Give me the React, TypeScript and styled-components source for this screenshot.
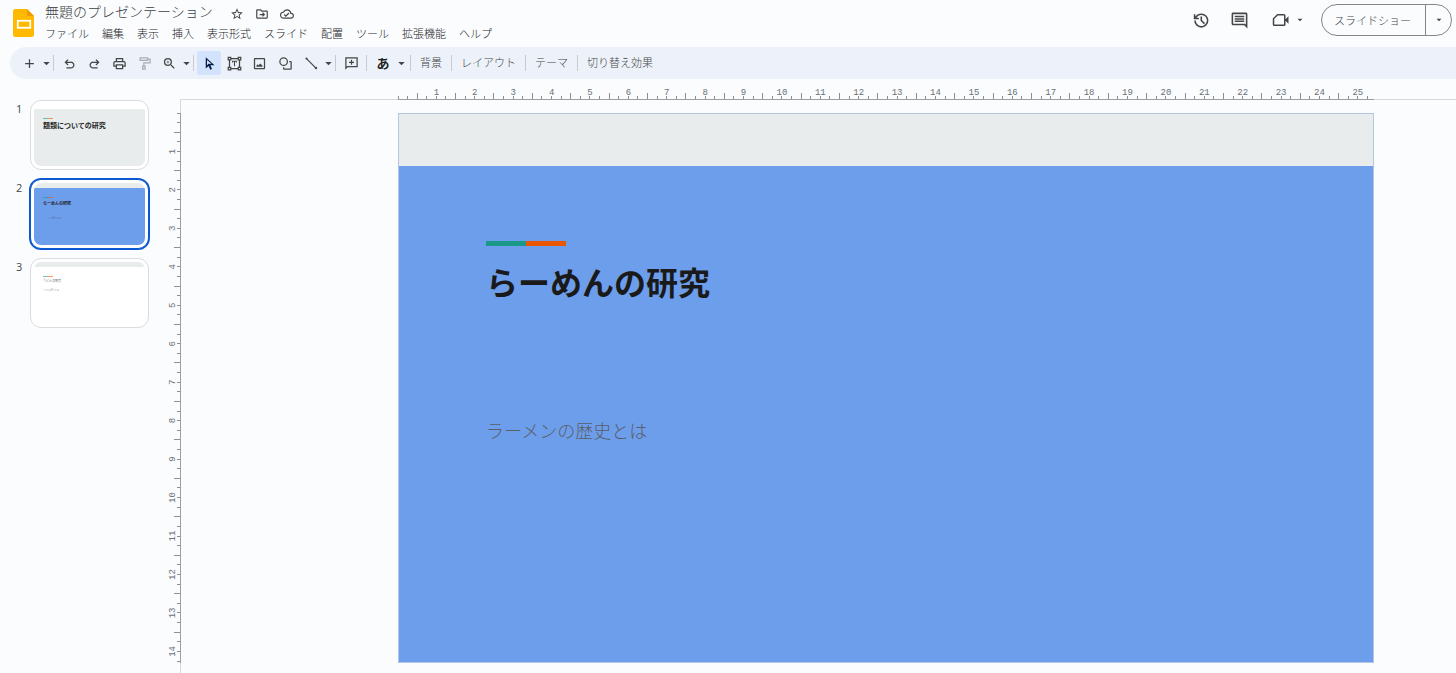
import React from 'react';
import styled, { createGlobalStyle, css } from 'styled-components';

const Global = createGlobalStyle`
  *, *::before, *::after { box-sizing: border-box; }
  body {
    margin: 0;
    background: #fafcfe;
    color: #444746;
    font-family: "Noto Sans CJK JP", sans-serif;
    font-weight: 300;
    font-size: 11px;
    overflow: hidden;
  }
  button { font: inherit; color: inherit; background: none; border: 0; padding: 0; margin: 0; }
  h1, h2, p, ol, ul { margin: 0; padding: 0; list-style: none; }
`;

const Page = styled.div`
  display: flex;
  flex-direction: column;
  height: 100vh;
`;

const Header = styled.header`
  display: flex;
  justify-content: space-between;
  height: 47px;
  padding: 0 4px 0 13px;
`;

const Brand = styled.div`
  display: flex;
  gap: 11px;
`;

const LogoLink = styled.a`
  display: block;
  padding-top: 9px;
  height: 37px;
  svg { display: block; }
`;

const TitleRow = styled.div`
  display: flex;
  align-items: center;
  gap: 17px;
  height: 24px;
`;

const DocTitle = styled.h1`
  font-size: 14px;
  line-height: 22px;
  padding-bottom: 2px;
  font-weight: 300;
  color: #3c4043;
`;

const TitleActions = styled.div`
  display: flex;
  gap: 11px;
  padding-top: 4px;
`;

const MenuBar = styled.nav`
  display: flex;
  gap: 13px;
`;

const MenuItem = styled.button`
  font-size: 11px;
  line-height: 18px;
  color: #1f1f1f;
  white-space: nowrap;
`;

const HeaderActions = styled.div`
  display: flex;
  align-items: flex-start;
  padding-top: 4px;
`;

const IconButton = styled.button<{ $w?: number; $h?: number; $active?: boolean; $faded?: boolean }>`
  display: flex;
  flex: none;
  align-items: center;
  justify-content: center;
  width: ${p => p.$w ?? 24}px;
  height: ${p => p.$h ?? 24}px;
  border-radius: 2px;
  ${p => p.$active && css`background: #d3e3fd; color: #041e49;`}
  ${p => p.$faded && css`opacity: 0.4;`}
  svg { display: block; flex: none; }
`;

const SlideshowGroup = styled.div`
  display: flex;
  height: 32px;
  margin-left: 16px;
  border: 1px solid #80868b;
  border-radius: 16px;
`;

const SlideshowButton = styled.button`
  padding: 0 12px;
  width: 104px;
  font-size: 11px;
  white-space: nowrap;
  text-align: left;
  border-right: 1px solid #80868b;
`;

const Toolbar = styled.div`
  display: flex;
  align-items: center;
  gap: 1px;
  flex: none;
  height: 32px;
  margin-left: 10px;
  padding-left: 7px;
  border-radius: 16px 0 0 16px;
  background: #edf2fa;
`;

const Divider = styled.span<{ $gap?: number }>`
  flex: none;
  width: 1px;
  height: 16px;
  margin: 0 ${p => p.$gap ?? 2}px;
  background: #c7cbd1;
`;

const TextButton = styled.button`
  padding: 0 4px 2px;
  font-size: 11px;
  line-height: 22px;
  white-space: nowrap;
`;

const InputTools = styled.button`
  width: 26px;
  height: 24px;
  font-size: 13px;
  line-height: 24px;
  font-weight: 700;
  color: #1f1f1f;
`;

const Main = styled.main`
  display: flex;
  flex: 1;
  min-height: 0;
`;

const Filmstrip = styled.ol`
  flex: none;
  width: 160px;
  padding: 21px 0 0 13px;
  display: flex;
  flex-direction: column;
  gap: 9px;
`;

const FilmItem = styled.li`
  display: flex;
`;

const FilmNumber = styled.span`
  width: 17px;
  padding: 2px 0 0 3px;
  font: 400 11px/14px "Open Sans", sans-serif;
  color: #444746;
`;

const Thumb = styled.button<{ $selected?: boolean }>`
  display: block;
  width: 119px;
  height: 70px;
  padding: 3px;
  background: #fff;
  border: 1px solid #dadce0;
  border-radius: 11px;
  ${p => p.$selected && css`border-color: #0b57d0; box-shadow: 0 0 0 1px #0b57d0;`}
`;

const ThumbSlide = styled.span<{ $top: string; $body: string }>`
  display: flex;
  flex-direction: column;
  height: 100%;
  border-radius: 7px;
  overflow: hidden;
  text-align: left;
  background: linear-gradient(${p => p.$top} 5px, ${p => p.$body} 5px);
  padding: 14px 0 0 9px;
`;

const ThumbTitle = styled.span<{ $size: number; $bold?: boolean; $gap: number }>`
  margin: 1px 0 ${p => p.$gap}px;
  font-size: ${p => p.$size}px;
  line-height: ${p => p.$size + 4}px;
  font-weight: ${p => (p.$bold ? 700 : 300)};
  color: #1f1f1f;
  white-space: nowrap;
`;

const ThumbText = styled.span`
  font-size: 2px;
  line-height: 4px;
  color: #444746;
`;

const Accent = styled.span<{ $w: number; $h: number; $soft?: boolean }>`
  display: block;
  flex: none;
  width: ${p => p.$w}px;
  height: ${p => p.$h}px;
  opacity: ${p => (p.$soft ? 0.6 : 1)};
  background: linear-gradient(90deg, #1a9988 50%, #eb5600 50%);
`;

const Workspace = styled.section`
  flex: 1;
  display: grid;
  grid-template-columns: 21px 217px minmax(0, 1fr) 82px;
  grid-template-rows: 21px 13px auto 1fr;
`;

const HorizontalRuler = styled.svg`
  grid-column: 3;
  grid-row: 1;
  display: block;
  width: 100%;
  height: 21px;
  overflow: visible;
`;

const VerticalRuler = styled.svg`
  grid-column: 1;
  grid-row: 3;
  display: block;
  width: 21px;
  height: 100%;
  overflow: visible;
`;

const CanvasFrame = styled.div`
  grid-column: 2 / 5;
  grid-row: 2 / 5;
  margin: -1px 0 0 -1px;
  border: solid #d5d8dc;
  border-width: 1px 0 0 1px;
`;

const Slide = styled.article`
  grid-column: 3;
  grid-row: 3;
  aspect-ratio: 975 / 549;
  border: 1px solid #b4c6e4;
  background: linear-gradient(#e8eced 52px, #6d9eeb 52px);
  padding: 127px 87px;
`;

const SlideTitle = styled.h2`
  margin-top: 11px;
  font-size: 32px;
  line-height: 48px;
  font-weight: 700;
  color: #1a1a1a;
`;

const SlideText = styled.p`
  margin-top: 111px;
  font-size: 18px;
  line-height: 28px;
  font-weight: 300;
  color: #595f69;
`;

const PATHS = {
  star: 'M22 9.24l-7.19-.62L12 2 9.19 8.63 2 9.24l5.46 4.73L5.82 21 12 17.27 18.18 21l-1.63-7.03L22 9.24zM12 15.4l-3.76 2.27 1-4.28-3.32-2.88 4.38-.38L12 6.1l1.71 4.04 4.38.38-3.32 2.88 1 4.28L12 15.4z',
  move: 'M20 6h-8l-2-2H4c-1.1 0-2 .9-2 2v12c0 1.1.9 2 2 2h16c1.1 0 2-.9 2-2V8c0-1.1-.9-2-2-2zm0 12H4V6h5.17l2 2H20v10zm-7.8-2.6 1.4 1.4L17.4 13l-3.8-3.8-1.4 1.4L13.6 12H8v2h5.6z',
  cloud: 'M19.35 10.04A7.49 7.49 0 0 0 12 4C9.11 4 6.6 5.64 5.35 8.04A5.994 5.994 0 0 0 0 14c0 3.31 2.69 6 6 6h13c2.76 0 5-2.24 5-5 0-2.64-2.05-4.78-4.65-4.96zM19 18H6c-2.21 0-4-1.79-4-4 0-2.05 1.53-3.76 3.56-3.97l1.07-.11.5-.95A5.469 5.469 0 0 1 12 6c2.62 0 4.88 1.86 5.39 4.43l.3 1.5 1.53.11A2.98 2.98 0 0 1 22 15c0 1.65-1.35 3-3 3zm-9-3.82-2.09-2.09L6.5 13.5 10 17l6.01-6.01-1.41-1.41z',
  history: 'M13 3a9 9 0 0 0-7.5 4.03V4h-2v6.5H10v-2H6.9A7 7 0 1 1 6 12H4a9 9 0 1 0 9-9zm-1 4v5.4l4.3 4.3 1.4-1.4-3.7-3.7V7z',
  comment: 'M21.99 4c0-1.1-.89-2-1.99-2H4c-1.1 0-2 .9-2 2v12c0 1.1.9 2 2 2h14l4 4-.01-18zM20 4v13.17L18.83 16H4V4h16zM6 12h12v2H6zm0-3h12v2H6zm0-3h12v2H6z',
  meet: 'M7 4h9a2 2 0 0 1 2 2v12a2 2 0 0 1-2 2H3a2 2 0 0 1-2-2v-8zM7.8 6 3 10.8V18h13V6zM18 11l4-4v10l-4-4z',
  drop: 'M6 9l6 6 6-6z',
  add: 'M19 13h-6v6h-2v-6H5v-2h6V5h2v6h6z',
  undo: 'M7 20v-2h7.1a3.9 3.9 0 0 0 2.7-1 3.3 3.3 0 0 0 0-5 3.9 3.9 0 0 0-2.7-1H7.8l2.6 2.6L9 15l-5-5 5-5 1.4 1.4L7.8 9h6.3a5.8 5.8 0 0 1 4.2 1.6 5.2 5.2 0 0 1 0 7.8 5.8 5.8 0 0 1-4.2 1.6z',
  redo: 'M17 20v-2H9.9a3.9 3.9 0 0 1-2.7-1 3.3 3.3 0 0 1 0-5 3.9 3.9 0 0 1 2.7-1h6.3l-2.6 2.6L15 15l5-5-5-5-1.4 1.4L16.2 9H9.9a5.8 5.8 0 0 0-4.2 1.6 5.2 5.2 0 0 0 0 7.8A5.8 5.8 0 0 0 9.9 20z',
  print: 'M19 8h-1V3H6v5H5c-1.66 0-3 1.34-3 3v6h4v4h12v-4h4v-6c0-1.66-1.34-3-3-3zM8 5h8v3H8V5zm8 14H8v-4h8v4zm2-4v-2H6v2H4v-4c0-.55.45-1 1-1h14c.55 0 1 .45 1 1v4h-2z',
  paint: 'M18 4V3c0-.55-.45-1-1-1H5c-.55 0-1 .45-1 1v4c0 .55.45 1 1 1h12c.55 0 1-.45 1-1V6h2v4H10v5H8v7h6v-7h-2v-3h10V4h-4zM16 6H6V4h10zm-4 11v3h-2v-3z',
  zoom: 'M15.5 14h-.79l-.28-.27A6.471 6.471 0 0 0 16 9.5 6.5 6.5 0 1 0 9.5 16c1.61 0 3.09-.59 4.23-1.57l.27.28v.79l5 4.99L20.49 19l-4.99-5zm-6 0C7.01 14 5 11.99 5 9.5S7.01 5 9.5 5 14 7.01 14 9.5 11.99 14 9.5 14zm.5-7H9v2H7v1h2v2h1v-2h2V9h-2V7z',
  pointer: 'M6 2v18l4.6-4.2 2.6 6.2 2.8-1.2-2.6-6H20zm2 4.4 7.2 5.9h-4.8L8 14.8z',
  textbox: 'M1 1h6v2h10V1h6v6h-2v10h2v6h-6v-2H7v2H1v-6h2V7H1zm2 2v2h2V3zm16 0v2h2V3zM7 5v2H5v10h2v2h10v-2h2V7h-2V5zM3 19v2h2v-2zm16 0v2h2v-2zM8 7.5h8v3h-1.5V9.3h-1.6v7.2h-1.8V9.3H9.5v1.2H8z',
  image: 'M19 5v14H5V5h14m0-2H5c-1.1 0-2 .9-2 2v14c0 1.1.9 2 2 2h14c1.1 0 2-.9 2-2V5c0-1.1-.9-2-2-2zm-2 14H7v-1.5l2-2.5 1.5 1.8L13.5 12l3.5 4z',
  shape: 'M9 2a7 7 0 1 0 0 14A7 7 0 0 0 9 2zm0 2a5 5 0 1 1 0 10A5 5 0 0 1 9 4zm9 4h2a2 2 0 0 1 2 2v10a2 2 0 0 1-2 2H10a2 2 0 0 1-2-2v-2h2v2h10V10h-2z',
  line: 'M3 2.5a2 2 0 0 1 2.8 2.1L18.6 17.4A2 2 0 1 1 17.2 18.8L4.4 6A2 2 0 0 1 3 2.5z',
  addComment: 'M2 2h20v16H6l-4 4zm2 2v13.2L5.2 16H20V4zm7 2h2v3h3v2h-3v3h-2v-3H8V9h3z',
};

type IconName = keyof typeof PATHS;

const Icon = ({ name, size }: { name: IconName; size: number }) => (
  <svg width={size} height={size} viewBox="0 0 24 24" fill="currentColor" fillRule="evenodd" aria-hidden="true">
    <path d={PATHS[name]} />
  </svg>
);

interface ToolProps {
  name: IconName;
  label: string;
  size?: number;
  $w?: number;
  $h?: number;
  $active?: boolean;
  $faded?: boolean;
}

const Tool = ({ name, label, size = 15, ...rest }: ToolProps) => (
  <IconButton aria-label={label} {...rest}><Icon name={name} size={size} /></IconButton>
);

const DropTool = ({ label }: { label: string }) => <Tool name="drop" label={label} size={13} $w={8} />;

const SlidesLogo = () => (
  <svg width="21" height="28" viewBox="0 0 21 28" aria-hidden="true">
    <path d="M2.5 0H14l7 7v18.5a2.5 2.5 0 0 1-2.5 2.5h-16A2.5 2.5 0 0 1 0 25.5v-23A2.5 2.5 0 0 1 2.5 0z" fill="#ffba00" />
    <path d="M14 0l7 7h-5.5A1.5 1.5 0 0 1 14 5.5z" fill="#f29900" />
    <rect x="4.75" y="11.75" width="12.5" height="7" fill="none" stroke="#fff" strokeWidth="1.75" />
  </svg>
);

const CM_WIDTH = 25.42;
const CM_HEIGHT = 14.29;

const ticks = (length: number) => Array.from({ length: Math.floor(length * 4) + 1 }, (_, i) => i);
const labels = (length: number) => Array.from({ length: Math.floor(length) }, (_, i) => i + 1);
const pct = (value: number, total: number) => `${(value / total) * 100}%`;

const RulerText = styled.text`
  font: 400 9px "Liberation Mono", monospace;
  fill: #6b7075;
  text-anchor: middle;
`;

const TopRuler = () => (
  <HorizontalRuler role="img" aria-label="水平ルーラー" shapeRendering="crispEdges">
    <line x1="0" x2="100%" y1="20.5" y2="20.5" stroke="#9aa0a6" />
    {ticks(CM_WIDTH).map(i => (
      <line key={i} x1={pct(i / 4, CM_WIDTH)} x2={pct(i / 4, CM_WIDTH)} y1={i % 4 === 2 ? 14 : 17} y2="20" stroke="#8b9095" />
    ))}
    {labels(CM_WIDTH).map(n => (
      <RulerText key={n} x={pct(n, CM_WIDTH)} y="16">{n}</RulerText>
    ))}
  </HorizontalRuler>
);

const SideRuler = () => (
  <VerticalRuler role="img" aria-label="垂直ルーラー" shapeRendering="crispEdges">
    <line x1="20.5" x2="20.5" y1="0" y2="100%" stroke="#9aa0a6" />
    {ticks(CM_HEIGHT).map(i => (
      <line key={i} x1={i % 4 === 2 ? 14 : 17} x2="20" y1={pct(i / 4, CM_HEIGHT)} y2={pct(i / 4, CM_HEIGHT)} stroke="#8b9095" />
    ))}
    {labels(CM_HEIGHT).map(n => (
      <svg key={n} x="15" y={pct(n, CM_HEIGHT)} overflow="visible">
        <RulerText transform="rotate(-90)">{n}</RulerText>
      </svg>
    ))}
  </VerticalRuler>
);

const MENUS = ['ファイル', '編集', '表示', '挿入', '表示形式', 'スライド', '配置', 'ツール', '拡張機能', 'ヘルプ'];
const SLIDE_ACTIONS = ['背景', 'レイアウト', 'テーマ', '切り替え効果'];

const THUMBS = [
  { top: '#ffffff', body: '#e8eced', title: '麺類についての研究', size: 7, bold: true, gap: 0, text: '' },
  { top: '#e8eced', body: '#6d9eeb', title: 'らーめんの研究', size: 4, bold: true, gap: 10, text: 'ラーメンの歴史とは', selected: true },
  { top: '#e8eced', body: '#ffffff', title: 'うどんの研究', size: 3, bold: false, gap: 4, text: 'うどんの歴史とは' },
];

export default function App() {
  return (
    <Page>
      <Global />
      <Header>
        <Brand>
          <LogoLink href="#" aria-label="スライドのホーム"><SlidesLogo /></LogoLink>
          <div>
            <TitleRow>
              <DocTitle>無題のプレゼンテーション</DocTitle>
              <TitleActions>
                <Tool name="star" label="スター" size={14} $w={14} $h={14} />
                <Tool name="move" label="移動" size={14} $w={14} $h={14} />
                <Tool name="cloud" label="保存状況" size={14} $w={14} $h={14} />
              </TitleActions>
            </TitleRow>
            <MenuBar>{MENUS.map(m => <MenuItem key={m}>{m}</MenuItem>)}</MenuBar>
          </div>
        </Brand>
        <HeaderActions>
          <Tool name="history" label="変更履歴" size={19} $w={22} $h={32} />
          <Tool name="comment" label="コメント" size={19} $w={56} $h={32} />
          <Tool name="meet" label="会議" size={18} $w={28} $h={32} />
          <Tool name="drop" label="会議のメニュー" size={10} $w={10} $h={32} />
          <SlideshowGroup>
            <SlideshowButton>スライドショー</SlideshowButton>
            <Tool name="drop" label="スライドショーのオプション" size={10} $w={25} $h={30} />
          </SlideshowGroup>
        </HeaderActions>
      </Header>
      <Toolbar role="toolbar">
        <Tool name="add" label="新しいスライド" />
        <DropTool label="レイアウト付きスライド" />
        <Divider />
        <Tool name="undo" label="元に戻す" />
        <Tool name="redo" label="やり直す" />
        <Tool name="print" label="印刷" />
        <Tool name="paint" label="書式の貼り付け" $faded />
        <Tool name="zoom" label="ズーム" />
        <DropTool label="ズームのメニュー" />
        <Divider />
        <Tool name="pointer" label="選択" $active />
        <Tool name="textbox" label="テキストボックス" />
        <Tool name="image" label="画像を挿入" />
        <Tool name="shape" label="図形" $w={26} />
        <Tool name="line" label="線" />
        <DropTool label="線のメニュー" />
        <Divider />
        <Tool name="addComment" label="コメントを追加" />
        <Divider />
        <InputTools>あ</InputTools>
        <DropTool label="入力ツール" />
        {SLIDE_ACTIONS.map(a => (
          <React.Fragment key={a}>
            <Divider $gap={4} />
            <TextButton>{a}</TextButton>
          </React.Fragment>
        ))}
      </Toolbar>
      <Main>
        <Filmstrip>
          {THUMBS.map((t, i) => (
            <FilmItem key={t.title}>
              <FilmNumber>{i + 1}</FilmNumber>
              <Thumb $selected={t.selected}>
                <ThumbSlide $top={t.top} $body={t.body}>
                  <Accent $w={10} $h={1} $soft />
                  <ThumbTitle $size={t.size} $bold={t.bold} $gap={t.gap}>{t.title}</ThumbTitle>
                  {t.text && <ThumbText>{t.text}</ThumbText>}
                </ThumbSlide>
              </Thumb>
            </FilmItem>
          ))}
        </Filmstrip>
        <Workspace>
          <CanvasFrame />
          <TopRuler />
          <SideRuler />
          <Slide>
            <Accent $w={80} $h={5} />
            <SlideTitle>らーめんの研究</SlideTitle>
            <SlideText>ラーメンの歴史とは</SlideText>
          </Slide>
        </Workspace>
      </Main>
    </Page>
  );
}
